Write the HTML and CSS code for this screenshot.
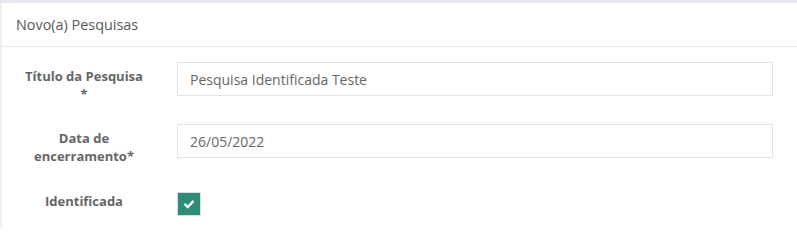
FILE: index.html
```html
<!DOCTYPE html>
<html lang="pt">
<head>
<meta charset="utf-8">
<title>Novo(a) Pesquisas</title>
<link rel="stylesheet" href="styles.css">
</head>
<body>
<div class="topbar"></div>
<div class="layout">
  <div class="side"></div>
  <section class="panel">
    <header class="panel-head">Novo(a) Pesquisas</header>
    <form class="panel-body">
      <div class="row">
        <label class="lbl">Título da Pesquisa *</label>
        <div class="field"><input class="input" type="text" value="Pesquisa Identificada Teste"></div>
      </div>
      <div class="row">
        <label class="lbl">Data de encerramento*</label>
        <div class="field"><input class="input" type="text" value="26/05/2022"></div>
      </div>
      <div class="row row-check">
        <label class="lbl lbl-check">Identificada</label>
        <div class="field field-check">
          <span class="check">
            <svg width="10" height="9" viewBox="0 0 10 9"><path d="M1.3 4.6 L3.8 7 L8.8 1.8" fill="none" stroke="#fff" stroke-width="2.4" stroke-linecap="square"/></svg>
          </span>
        </div>
      </div>
    </form>
  </section>
</div>
</body>
</html>
```

FILE: styles.css
```css
* { box-sizing: border-box; }
html, body { margin: 0; padding: 0; }
body {
  background: #fff;
  font-family: "Open Sans", "Liberation Sans", sans-serif;
  color: #555;
  height: 228px;
  overflow: hidden;
}
.topbar { height: 3px; background: #e4e8ec; }
.layout { display: flex; height: 225px; }
.side { width: 2px; background: #f2efea; }
.panel { flex: 1; background: #fff; }
.panel-head {
  height: 44px;
  padding: 0 14px;
  display: flex;
  align-items: center;
  font-size: 14.4px;
  color: #5a5a5a;
  border-bottom: 1px solid #e6e6e6;
}
.panel-body { padding: 15px 24px 0 13px; }
.row {
  display: grid;
  grid-template-columns: 138px 1fr;
  column-gap: 24px;
  align-items: start;
  height: 62px;
}
.lbl {
  font-size: 13px;
  font-weight: 700;
  line-height: 18px;
  color: #666;
  text-align: center;
  padding: 5px 8px 0;
}
.lbl-check { padding-top: 6px; }
.field-check { padding-top: 6px; }
.input {
  display: block;
  width: 100%;
  height: 34px;
  border: 1px solid #e3e3e3;
  padding: 0 12px;
  font-family: inherit;
  font-size: 14px;
  color: #666;
  background: #fff;
  outline: none;
}
.check {
  display: flex;
  align-items: center;
  justify-content: center;
  width: 24px;
  height: 24px;
  background: #2e8c77;
  border: 1px solid #d9dedc;
}
```
